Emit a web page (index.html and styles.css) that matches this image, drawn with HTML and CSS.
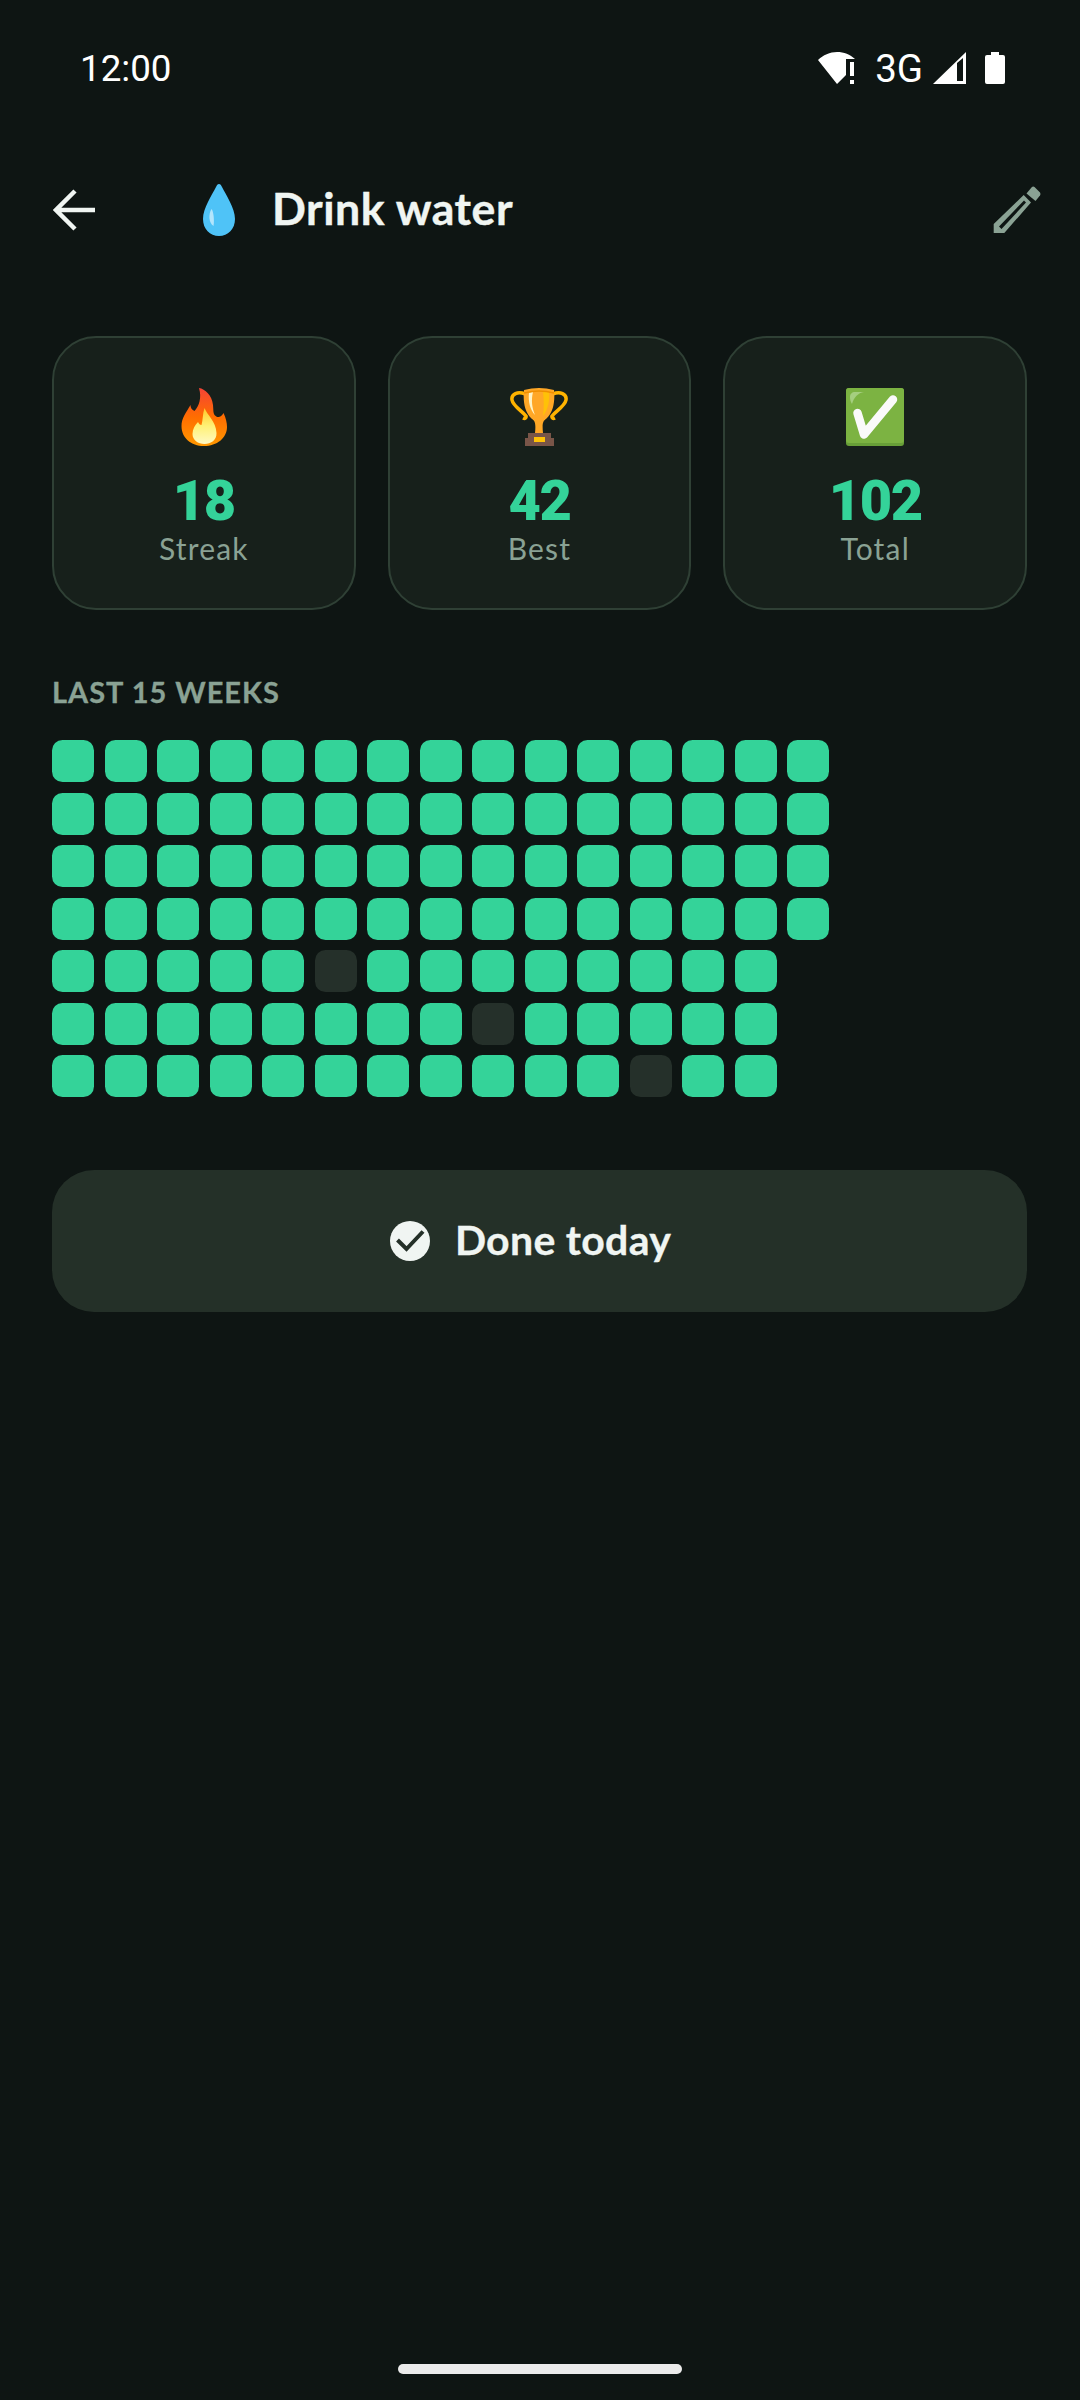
FILE: index.html
```html
<!DOCTYPE html>
<html lang="en">
<head>
    <meta charset="UTF-8">
    <meta name="viewport" content="width=device-width, initial-scale=1.0">
    <title>Drink water</title>
    <link rel="stylesheet" href="styles.css">
</head>
<body>
    <div class="status-bar">
        <span class="clock">12:00</span>
        <div class="status-icons">
            <svg class="icon-wifi" width="38" height="32" viewBox="0 0 38 32">
                <path fill="#fff" d="M0 8C5 3 12 0 19 0C26 0 32 2.500 37 7H28V23L19 32Z"/>
                <path fill="#fff" d="M32 10H36V24H32ZM32 28H36V32H32Z"/>
            </svg>
            <span class="network">3G</span>
            <svg class="icon-signal" width="33" height="32" viewBox="0 0 33 32">
                <path fill="#fff" fill-rule="evenodd" d="M0 32L33 0V32ZM24 11V29H30V6Z"/>
            </svg>
            <svg class="icon-battery" width="20" height="32" viewBox="0 0 20 32">
                <path fill="#fff" d="M6 0H14V3H18Q20 3 20 5V30Q20 32 18 32H2Q0 32 0 30V5Q0 3 2 3H6Z"/>
            </svg>
        </div>
    </div>

    <header class="top-bar">
        <svg class="icon-back" width="42" height="42" viewBox="0 0 42 42">
            <path fill="none" stroke="#f0f5f2" stroke-width="4.500" d="M42 21H4M22 2L3 21L22 40"/>
        </svg>
        <svg class="icon-drop" width="32" height="52" viewBox="0 0 32 52">
            <path fill="#4fc3f7" d="M16 0C17.500 0 18 1 19 3C23 11 32 24 32 35C32 45 25 52 16 52C7 52 0 45 0 35C0 24 9 11 13 3C14 1 14.500 0 16 0Z"/>
            <path fill="#b3e5fc" d="M8.500 25C10.500 27 11.500 36 10.500 42C6 39 5 31 8.500 25Z"/>
        </svg>
        <h1 class="title">Drink water</h1>
        <svg class="icon-edit" width="48" height="48" viewBox="0 0 48 48">
            <path fill="#8aa294" fill-rule="evenodd" d="M0.700 38L30.700 9L38 16.500L11.300 47H0.700ZM6 40.500L8.500 43L33 16.500L31 14.500Z"/>
            <path fill="#8aa294" d="M33.500 7.500L38.500 1.500Q40 0 41.500 1L47 6.500Q48 8 47 9.500L42.500 15Z"/>
        </svg>
    </header>

    <section class="stats">
        <div class="stat-card">
            <svg class="stat-emoji" width="58" height="58" viewBox="0 0 58 58">
                <defs>
                    <linearGradient id="flame" x1="0" y1="0" x2="0" y2="1">
                        <stop offset="0" stop-color="#f44336"/>
                        <stop offset="0.500" stop-color="#ff6d00"/>
                        <stop offset="1" stop-color="#ff9800"/>
                    </linearGradient>
                    <linearGradient id="flame-inner" x1="0" y1="0" x2="0" y2="1">
                        <stop offset="0" stop-color="#ffca28"/>
                        <stop offset="0.500" stop-color="#fff176"/>
                        <stop offset="1" stop-color="#fff9c4"/>
                    </linearGradient>
                </defs>
                <path fill="url(#flame)" d="M24 0C30 1 37 7 38 17C38.500 22 38 25 39.500 27C42 30 46 30 48.500 25C51 30 52 35 52 39C52 50 42 58 29 58C16 58 6.500 50 6.500 38C6.500 30 11 25 15.500 17C15.500 20 17 22 19.500 23C24 18 27 10 24 0Z"/>
                <path fill="url(#flame-inner)" d="M29.500 20C32 27 41 33 41.500 45C41.800 52 36 56 29.500 56C23 56 17.500 52 17.500 46C17.500 41 20 37 23 34C24 36 25 37 26.500 37C28 32 27.500 26 29.500 20Z"/>
            </svg>
            <div class="stat-value">18</div>
            <div class="stat-label">Streak</div>
        </div>
        <div class="stat-card">
            <svg class="stat-emoji" width="58" height="58" viewBox="0 0 58 58">
                <path fill="none" stroke="#ffb300" stroke-width="3.500" d="M15 6C8 3 1 6 2 12C3 18 12 23 16 28C16.500 30 15 31 13 30"/>
                <path fill="none" stroke="#ffb300" stroke-width="3.500" d="M43 6C50 3 57 6 56 12C55 18 46 23 42 28C41.500 30 43 31 45 30"/>
                <path fill="#ffa726" d="M14 2Q29 -2 44 2C45 12 44 24 36 31C33 33 32 35 33 45H25C26 35 25 33 22 31C14 24 13 12 14 2Z"/>
                <path fill="#fff3c4" d="M19 5L23 4C21 12 22 20 25 27C20 22 18 13 19 5Z"/>
                <path fill="#ffc107" d="M33 4L39 3C40 12 38 22 33 28C34 20 34 12 33 4Z"/>
                <path fill="none" stroke="#ef8f00" stroke-width="1.500" d="M14 5Q29 1 44 5"/>
                <path fill="#795548" d="M18 45H41V50H44V58H15V50H18Z"/>
                <rect fill="#ffc107" x="24" y="49" width="11" height="5"/>
            </svg>
            <div class="stat-value">42</div>
            <div class="stat-label">Best</div>
        </div>
        <div class="stat-card">
            <svg class="stat-emoji" width="58" height="58" viewBox="0 0 58 58">
                <rect fill="#689f38" width="58" height="58" rx="3"/>
                <rect fill="#7cb342" width="58" height="55" rx="3"/>
                <path fill="#a5cf7f" d="M4 9C4 6 6 4 9 4H18C12 5 8 9 6 16C4.500 14 4 11 4 9Z"/>
                <path fill="none" stroke="#fafafa" stroke-width="8.500" stroke-linecap="round" stroke-linejoin="round" d="M11.500 25L18 46.500L47 11.500"/>
            </svg>
            <div class="stat-value">102</div>
            <div class="stat-label">Total</div>
        </div>
    </section>

    <h2 class="section-title">LAST 15 WEEKS</h2>
    <div class="heatmap">
        <div class="heat-row">
            <div class="cell"></div><div class="cell"></div><div class="cell"></div><div class="cell"></div><div class="cell"></div>
            <div class="cell"></div><div class="cell"></div><div class="cell"></div><div class="cell"></div><div class="cell"></div>
            <div class="cell"></div><div class="cell"></div><div class="cell"></div><div class="cell"></div><div class="cell"></div>
        </div>
        <div class="heat-row">
            <div class="cell"></div><div class="cell"></div><div class="cell"></div><div class="cell"></div><div class="cell"></div>
            <div class="cell"></div><div class="cell"></div><div class="cell"></div><div class="cell"></div><div class="cell"></div>
            <div class="cell"></div><div class="cell"></div><div class="cell"></div><div class="cell"></div><div class="cell"></div>
        </div>
        <div class="heat-row">
            <div class="cell"></div><div class="cell"></div><div class="cell"></div><div class="cell"></div><div class="cell"></div>
            <div class="cell"></div><div class="cell"></div><div class="cell"></div><div class="cell"></div><div class="cell"></div>
            <div class="cell"></div><div class="cell"></div><div class="cell"></div><div class="cell"></div><div class="cell"></div>
        </div>
        <div class="heat-row">
            <div class="cell"></div><div class="cell"></div><div class="cell"></div><div class="cell"></div><div class="cell"></div>
            <div class="cell"></div><div class="cell"></div><div class="cell"></div><div class="cell"></div><div class="cell"></div>
            <div class="cell"></div><div class="cell"></div><div class="cell"></div><div class="cell"></div><div class="cell"></div>
        </div>
        <div class="heat-row">
            <div class="cell"></div><div class="cell"></div><div class="cell"></div><div class="cell"></div><div class="cell"></div>
            <div class="cell missed"></div><div class="cell"></div><div class="cell"></div><div class="cell"></div><div class="cell"></div>
            <div class="cell"></div><div class="cell"></div><div class="cell"></div><div class="cell"></div>
        </div>
        <div class="heat-row">
            <div class="cell"></div><div class="cell"></div><div class="cell"></div><div class="cell"></div><div class="cell"></div>
            <div class="cell"></div><div class="cell"></div><div class="cell"></div><div class="cell missed"></div><div class="cell"></div>
            <div class="cell"></div><div class="cell"></div><div class="cell"></div><div class="cell"></div>
        </div>
        <div class="heat-row">
            <div class="cell"></div><div class="cell"></div><div class="cell"></div><div class="cell"></div><div class="cell"></div>
            <div class="cell"></div><div class="cell"></div><div class="cell"></div><div class="cell"></div><div class="cell"></div>
            <div class="cell"></div><div class="cell missed"></div><div class="cell"></div><div class="cell"></div>
        </div>
    </div>

    <button class="done-button">
        <svg width="40" height="40" viewBox="0 0 40 40">
            <circle fill="#f0f5f2" cx="20" cy="20" r="20"/>
            <path fill="none" stroke="#243028" stroke-width="4" d="M7.500 19L16.500 28L33 10.500"/>
        </svg>
        <span class="done-text">Done today</span>
    </button>

    <div class="home-handle"></div>
</body>
</html>
```

FILE: styles.css
```css
body {
    margin: 0;
    width: 1080px;
    height: 2400px;
    background-color: #0e1513;
    font-family: "Lato", sans-serif;
    color: #f0f5f2;
    display: flex;
    flex-direction: column;
    overflow: hidden;
}

.status-bar {
    height: 136px;
    padding: 0 75px 0 80px;
    display: flex;
    align-items: center;
    justify-content: space-between;
    font-family: "Roboto", sans-serif;
    font-size: 36.75px;
    color: #fff;
}
.status-icons {
    display: flex;
    align-items: center;
}
.network {
    margin: 0 10px 0 19px;
    font-size: 38.5px;
}
.icon-battery {
    margin-left: 19px;
}

.top-bar {
    height: 148px;
    padding: 0 39px 0 53px;
    display: flex;
    align-items: center;
}
.icon-drop {
    margin-left: 108px;
}
.title {
    margin: 0 0 6px 37px;
    font-size: 44.6px;
    font-weight: 700;
    letter-spacing: 0.55px;
    -webkit-text-stroke: 0.4px #f0f5f2;
    flex: 1;
}

.stats {
    margin-top: 52px;
    padding: 0 53px 0 52px;
    display: grid;
    grid-template-columns: repeat(3, 1fr);
    gap: 32px;
}
.stat-card {
    height: 274px;
    box-sizing: border-box;
    padding-top: 50px;
    background-color: #17201b;
    border: 2px solid #2f4035;
    border-radius: 44px;
    display: flex;
    flex-direction: column;
    align-items: center;
}
.stat-value {
    margin-top: 25px;
    font-family: "Roboto", sans-serif;
    font-size: 56px;
    font-weight: 900;
    line-height: 60px;
    letter-spacing: -1.5px;
    color: #34d399;
}
.stat-label {
    font-size: 30px;
    line-height: 34px;
    letter-spacing: 1.2px;
    color: #8aa294;
}

.section-title {
    margin: 64px 0 0 0;
    padding-left: 52px;
    font-size: 29px;
    font-weight: 700;
    line-height: 36px;
    letter-spacing: 1px;
    -webkit-text-stroke: 0.3px #8aa294;
    color: #8aa294;
}

.heatmap {
    margin-top: 30px;
    padding-left: 52px;
    display: flex;
    flex-direction: column;
    gap: 10.5px;
}
.heat-row {
    display: flex;
    gap: 10.5px;
}
.cell {
    width: 42px;
    height: 42px;
    border-radius: 10.5px;
    background-color: #34d399;
}
.cell.missed {
    background-color: #25302a;
}

.done-button {
    margin: 73px 53px 0 52px;
    height: 142px;
    padding: 0 18px 0 0;
    border: none;
    border-radius: 42px;
    background-color: #243028;
    color: #f0f5f2;
    font-family: "Lato", sans-serif;
    font-size: 41px;
    font-weight: 700;
    letter-spacing: 0.3px;
    -webkit-text-stroke: 0.3px #f0f5f2;
    display: flex;
    align-items: center;
    justify-content: center;
    gap: 25px;
}
.done-text {
    margin-bottom: 3px;
}

.home-handle {
    width: 284px;
    height: 10px;
    margin: auto auto 26px;
    border-radius: 5px;
    background-color: #ebebeb;
}
```
